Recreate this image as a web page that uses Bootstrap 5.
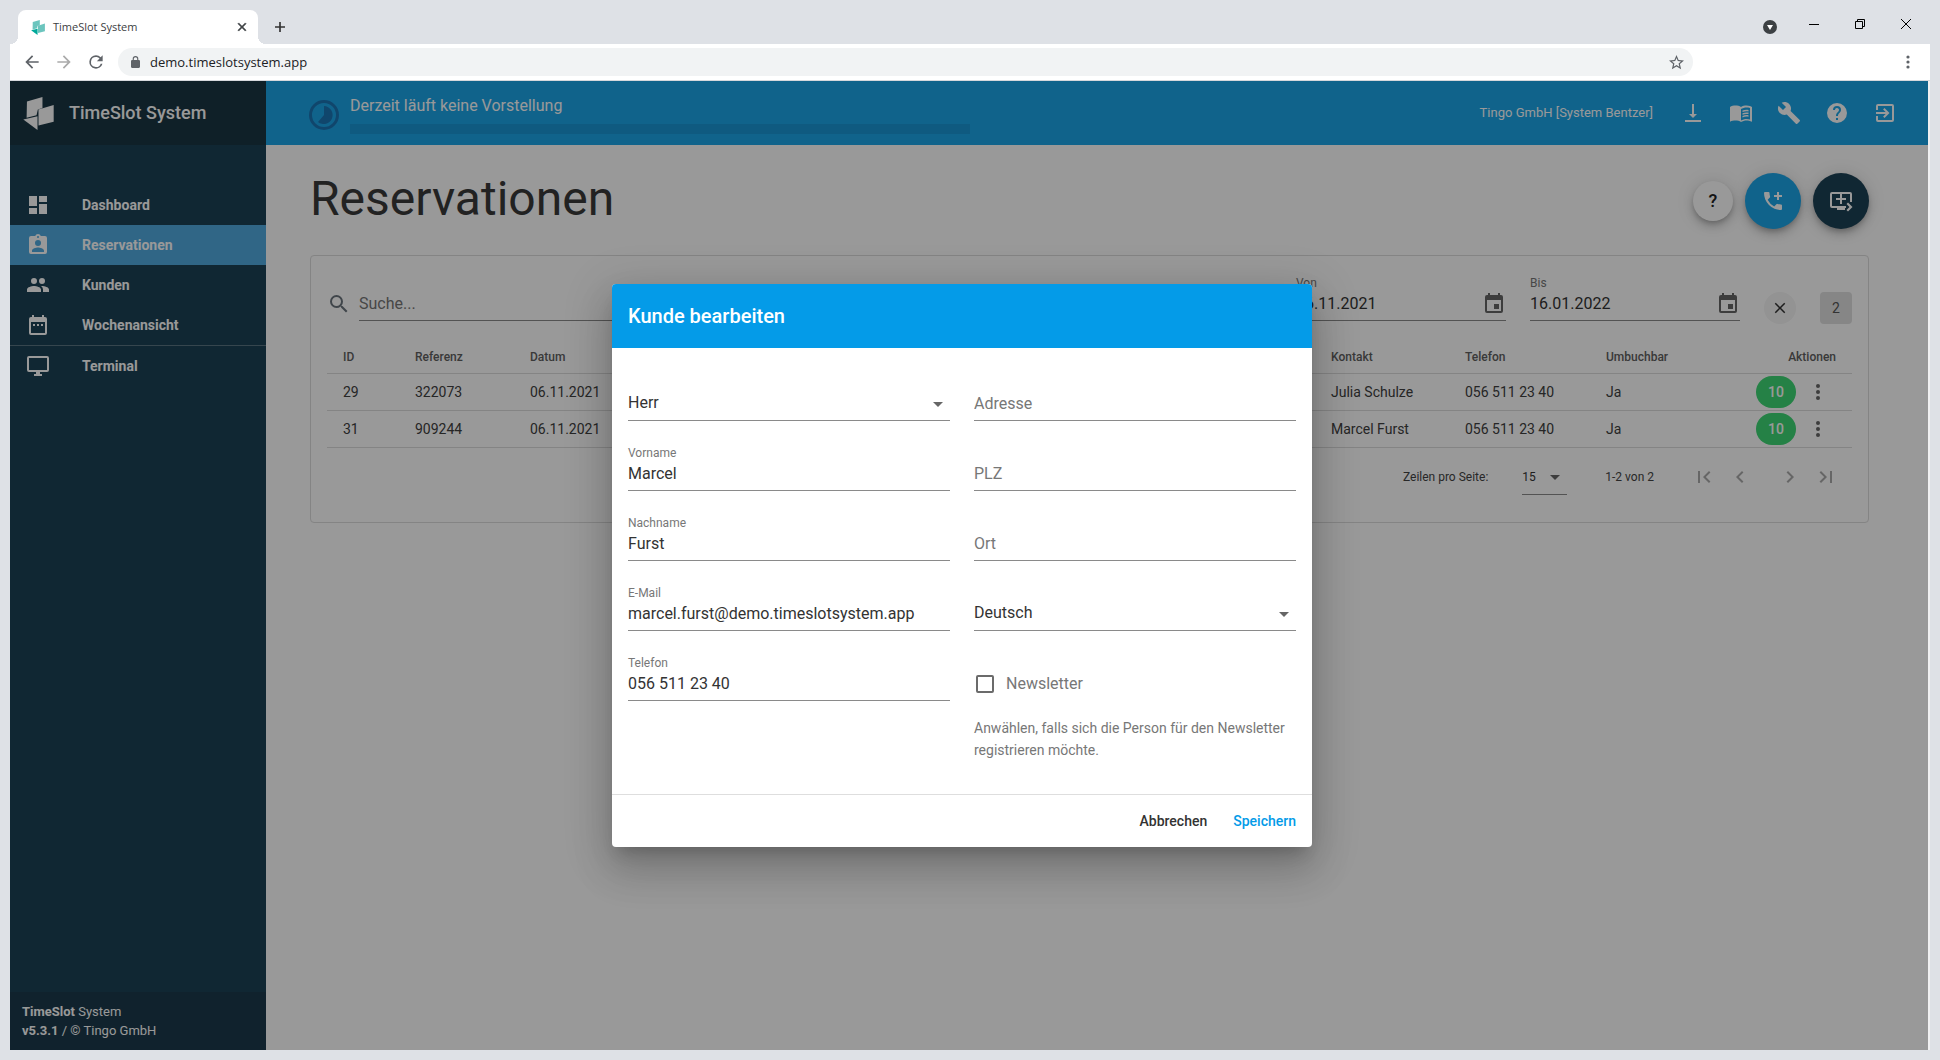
<!DOCTYPE html>
<html lang="de">
<head>
<meta charset="utf-8">
<title>TimeSlot System</title>
<meta name="viewport" content="width=device-width, initial-scale=1">
<link href="https://cdn.jsdelivr.net/npm/bootstrap@5.3.0/dist/css/bootstrap.min.css" rel="stylesheet">
<style>
:root{--frame:#dee1e6;--brand:#1ca5e8;--navy:#1c4155;--ui:"Open Sans","Noto Sans",sans-serif}
body{font-family:Roboto,sans-serif;font-size:14px;line-height:20px;background:var(--frame);color:#333}
svg{display:block;fill:currentColor;flex:none}
button{border:0;background:none;padding:0;color:inherit;font-weight:inherit}
.line-icon{fill:none;stroke:currentColor}
.dim{color:#aaa}
/* browser frame */
.tabstrip{height:44px;padding:10px 12px 0 18px}
.tab{width:240px;height:34px;background:#fff;border-radius:8px 8px 0 0;padding:0 9px 0 13px;font:11px/16px var(--ui);color:#3c4043;position:relative}
.tab::before,.tab::after{content:"";position:absolute;bottom:0;width:8px;height:8px}
.tab::before{left:-8px;background:radial-gradient(circle at 0 0,transparent 8px,#fff 8px)}
.tab::after{right:-8px;background:radial-gradient(circle at 100% 0,transparent 8px,#fff 8px)}
.new-tab{margin-left:12px}
.win-ctl{gap:36px;color:#000;padding-right:17px;padding-bottom:6px}
.win-menu{margin-right:-4px;margin-top:5px}
.viewport-frame{margin:0 10px 10px 10px}
.toolbar{height:37px;background:#fff;border-bottom:1px solid #d6d8dc;padding:0 14px 0 12px;color:#5f6368}
.address{height:28px;border-radius:14px;background:#f1f3f4;margin-left:12px;margin-right:207px;padding:0 9px 0 13px}
.address input{border:0;background:none;font:13px/20px var(--ui);color:#202124;outline:0;padding:0;margin-left:10px}
/* application */
.app{background:#fff;margin-right:2px;box-shadow:2px 0 0 #f0f0f1}
.sidebar{width:256px;background:var(--navy);color:#fff;flex:none}
.brandbar{height:64px;background:#1a3644;padding:0 13px;gap:15px;font-size:18px;font-weight:500}
.side-nav{padding-top:40px}
.side-link{height:40px;padding-left:16px;gap:32px;color:#fff;text-decoration:none;font-weight:700}
.side-link.active{background:#50aadf}
.side-rule{height:1px;background:#5a7583}
.side-foot{height:58px;background:#1b3a4b;padding:10px 12px;font-size:13px;line-height:19px}
.topbar{height:64px;background:var(--brand);color:#fff;padding:0 31px 0 43px}
.show-now{padding-top:3px;gap:11px}
.show-title{font-size:16px;line-height:20px}
.show-bar{height:10px;width:620px;background:#1a97d5;border-radius:0}
.user{font-size:13px}
.main-area{padding:24px 59px 0 44px}
.page-title{font-size:48px;line-height:60px;padding-bottom:4px;font-weight:400;margin:0;color:#3a3a3a}
.fab{width:56px;height:56px;border-radius:50%;color:#fff;display:grid;place-items:center;background:var(--brand);box-shadow:0 3px 5px -1px #0003,0 6px 10px #0002,0 1px 18px #0002}
.fab-dark{background:var(--navy)}
.fab-sm{width:40px;height:40px;background:#fff;color:#222;font-size:18px;font-weight:500}
.panel{border:1px solid #dcdcdc;border-radius:4px;margin-top:22px;padding:20px 16px 0;height:268px}
.search-box{margin-top:10px}
.uline{border:0;border-bottom:1px solid #8a8a8a;border-radius:0;background:none;outline:0;padding:0;font-size:16px;color:#333;height:35px;width:100%;display:block;appearance:none}
.uline::placeholder{color:#777;opacity:1}
.date-box{width:210px}
.cap{font-size:12px;line-height:14px;height:14px;color:#777;display:block}
.date-ctl{height:31px;border-bottom:1px solid #8a8a8a;padding-bottom:2px;color:#666}
.date-ctl input{border:0;outline:0;background:none;font-size:16px;padding:0;color:#333;min-width:0}
.grid-table{table-layout:fixed;margin:13px 0 0;width:100%;border-collapse:collapse;color:#404040}
.grid-table th{font-size:12px;font-weight:500;color:#606060;height:36px;padding:4px 16px 0}
.grid-table td{height:37px;padding:0 16px}
.grid-table tr{border-bottom:1px solid #dcdcdc}
.acts{gap:10px;color:#666}
.chip{width:40px;height:32px;border-radius:16px;background:#3fd775;color:#fff;font-weight:500;line-height:32px;text-align:center}
.sq{width:32px;height:32px;line-height:32px;border-radius:4px;background:#e0e0e0;text-align:center;color:#555}
.round{width:32px;height:32px;border-radius:50%;background:#f5f5f5;display:grid;place-items:center}
.pager{font-size:12px;color:#444;padding:12px 14px 0 0}
.pager .uline{font-size:12px}
.page-size{width:45px;margin:0 38px 0 34px}
.pager-range{margin-right:38px}
.pager-gap{width:26px}
.arrow-wrap{position:relative}
.arrow-wrap svg{position:absolute;right:0;top:50%;margin-top:-12px;pointer-events:none;color:#666}
/* dialog */
.overlay{position:absolute;inset:0 2px 0 0;background:rgba(0,0,0,.4);padding-right:14px}
.dialog{width:700px;border-radius:4px;background:#fff;overflow:hidden;box-shadow:0 11px 15px -7px #0003,0 24px 38px 3px #00000024,0 9px 46px 8px #0000001f}
.dialog-head{height:64px;background:#049be8;color:#fff;padding:0 16px;font-size:20px;font-weight:500;margin:0}
.dialog-body{padding:12px 16px 0;height:446px}
.dialog-foot{height:53px;border-top:1px solid #dedede;padding:0 16px;gap:26px;font-weight:500}
.save{color:#049be8}
.fields{flex:1 1 0}
.field{height:70px;padding-top:16px}
.field .cap{height:10px}
.tick-row{height:35px;font-size:16px;color:#777}
.tick{width:18px;height:18px;border:2px solid #6b6b6b;border-radius:2px;appearance:none;margin:0 12px 0 2px}
.hint{color:#777;line-height:22px;margin:7px 0 0}
</style>
<script src="https://cdn.jsdelivr.net/npm/bootstrap@5.3.0/dist/js/bootstrap.bundle.min.js"></script>
</head>
<body class="d-flex flex-column vh-100 overflow-hidden">
<svg width="0" height="0" class="position-absolute" aria-hidden="true">
  <symbol id="logo" viewBox="40 270 92 100"><path d="M51 284 98 270v33l-14 5-4 17-30 8zM86 308l46-14v51l-46 11z"/><path class="logo-tip" d="m40 338 43-10v42z"/></symbol>
  <symbol id="close" viewBox="0 0 24 24"><path d="M19 6.41 17.59 5 12 10.59 6.41 5 5 6.41 10.59 12 5 17.59 6.41 19 12 13.41 17.59 19 19 17.59 13.41 12z"/></symbol>
  <symbol id="caret" viewBox="0 0 24 24"><path d="m7 10 5 5 5-5z"/></symbol>
  <symbol id="event" viewBox="0 0 24 24"><path d="M17 12h-5v5h5v-5zM16 1v2H8V1H6v2H5a2 2 0 0 0-2 2v14a2 2 0 0 0 2 2h14a2 2 0 0 0 2-2V5a2 2 0 0 0-2-2h-1V1h-2zm3 18H5V8h14v11z"/></symbol>
  <symbol id="dots" viewBox="0 0 24 24"><circle cx="12" cy="6" r="2"/><circle cx="12" cy="12" r="2"/><circle cx="12" cy="18" r="2"/></symbol>
</svg>

<header class="tabstrip d-flex align-items-center">
  <div class="tab d-flex align-items-center">
    <svg width="14" height="15" viewBox="40 270 92 100" aria-hidden="true"><path fill="#6cc5be" d="M51 284 98 270v33l-14 5-4 17-30 8zM86 308l46-14v51l-46 11z"/><path fill="#00a99a" d="m40 338 43-10v42z"/></svg>
    <span class="flex-grow-1 ps-2">TimeSlot System</span>
    <button aria-label="Tab schließen"><svg width="14" height="14" stroke="currentColor"><use href="#close"/></svg></button>
  </div>
  <button class="new-tab" aria-label="Neuer Tab"><svg width="20" height="20" viewBox="0 0 24 24"><path d="M18 13h-5v5h-2v-5H6v-2h5V6h2v5h5z"/></svg></button>
  <div class="win-ctl ms-auto d-flex align-items-center">
    <button class="win-menu" aria-label="Tabs suchen"><svg width="14" height="14" viewBox="0 0 14 14"><circle cx="7" cy="7" r="7" fill="#3c4043"/><path d="M4 5h6l-3 5z" fill="#fff"/></svg></button>
    <button aria-label="Minimieren"><svg width="10" height="10"><path d="M0 5h10v1H0z"/></svg></button>
    <button aria-label="Verkleinern"><svg class="line-icon" width="10" height="10"><path d="M.5 2.500h7v7h-7zM2.500 2.500v-2h7v7h-2"/></svg></button>
    <button aria-label="Schließen"><svg class="line-icon" width="10" height="10"><path d="m0 0 10 10M10 0 0 10"/></svg></button>
  </div>
</header>

<div class="viewport-frame flex-grow-1 d-flex flex-column">
  <div class="toolbar d-flex align-items-center">
    <button aria-label="Zurück"><svg width="20" height="20" viewBox="0 0 24 24"><path d="M20 11H7.830l5.590-5.590L12 4l-8 8 8 8 1.410-1.410L7.830 13H20z"/></svg></button>
    <button class="dim ms-2 ps-1" aria-label="Vorwärts" disabled><svg width="20" height="20" viewBox="0 0 24 24"><path d="m12 4-1.410 1.410L16.170 11H4v2h12.170l-5.580 5.590L12 20l8-8z"/></svg></button>
    <button class="ms-2 ps-1" aria-label="Neu laden"><svg width="20" height="20" viewBox="0 0 24 24"><path d="M17.650 6.350A7.960 7.960 0 0 0 12 4a8 8 0 1 0 7.730 10h-2.080A6 6 0 1 1 12 6c1.660 0 3.140.69 4.220 1.780L13 11h7V4z"/></svg></button>
    <div class="address flex-grow-1 d-flex align-items-center">
      <svg width="9" height="12" viewBox="4 1 16 21" preserveAspectRatio="none"><path d="M18 8h-1V6A5 5 0 0 0 7 6v2H6a2 2 0 0 0-2 2v10c0 1.100.9 2 2 2h12a2 2 0 0 0 2-2V10a2 2 0 0 0-2-2zM9 6a3 3 0 0 1 6 0v2H9z"/></svg>
      <input class="flex-grow-1" aria-label="Adresse" value="demo.timeslotsystem.app">
      <svg width="15" height="15" viewBox="2 2 20 20"><path d="m22 9.240-7.190-.62L12 2 9.190 8.630 2 9.240l5.460 4.730L5.820 21 12 17.270 18.180 21l-1.630-7.030zM12 15.400l-3.760 2.270 1-4.280-3.320-2.880 4.380-.38L12 6.100l1.710 4.040 4.380.38-3.320 2.880 1 4.280z"/></svg>
    </div>
    <button aria-label="Menü"><svg width="16" height="16"><circle cx="8" cy="3" r="1.600"/><circle cx="8" cy="8" r="1.600"/><circle cx="8" cy="13" r="1.600"/></svg></button>
  </div>

  <div class="position-relative flex-grow-1 d-flex flex-column">
  <div class="app flex-grow-1 d-flex">
    <aside class="sidebar d-flex flex-column">
      <div class="brandbar d-flex align-items-center"><svg width="31" height="33"><use href="#logo"/></svg><span>TimeSlot System</span></div>
      <nav class="side-nav flex-grow-1">
        <a href="#" class="side-link d-flex align-items-center"><svg width="24" height="24"><path d="M3 13h8V3H3v10zm0 8h8v-6H3v6zm10 0h8V11h-8v10zm0-18v6h8V3h-8z"/></svg>Dashboard</a>
        <a href="#" class="side-link active d-flex align-items-center"><svg width="24" height="24"><path d="M19 3h-4.180a3 3 0 0 0-5.640 0H5a2 2 0 0 0-2 2v14a2 2 0 0 0 2 2h14a2 2 0 0 0 2-2V5a2 2 0 0 0-2-2zm-7 0a1 1 0 1 1 0 2 1 1 0 0 1 0-2zm0 4a3 3 0 1 1 0 6 3 3 0 0 1 0-6zm6 12H6v-1.400c0-2 4-3.100 6-3.100s6 1.100 6 3.100V19z"/></svg>Reservationen</a>
        <a href="#" class="side-link d-flex align-items-center"><svg width="24" height="24"><path d="M16 11a3 3 0 1 0 0-6 3 3 0 0 0 0 6zm-8 0a3 3 0 1 0 0-6 3 3 0 0 0 0 6zm0 2c-2.330 0-7 1.170-7 3.500V19h14v-2.500C15 14.170 10.330 13 8 13zm8 0-.97.05A4.200 4.200 0 0 1 17 16.500V19h6v-2.500c0-2.330-4.670-3.500-7-3.500z"/></svg>Kunden</a>
        <a href="#" class="side-link d-flex align-items-center"><svg width="24" height="24"><path d="M9 11H7v2h2zm4 0h-2v2h2zm4 0h-2v2h2zm2-7h-1V2h-2v2H8V2H6v2H5a2 2 0 0 0-2 2v14a2 2 0 0 0 2 2h14a2 2 0 0 0 2-2V6a2 2 0 0 0-2-2zm0 16H5V9h14z"/></svg>Wochenansicht</a>
        <div class="side-rule"></div>
        <a href="#" class="side-link d-flex align-items-center"><svg width="24" height="24"><path d="M21 2H3a2 2 0 0 0-2 2v12a2 2 0 0 0 2 2h7v2H8v2h8v-2h-2v-2h7a2 2 0 0 0 2-2V4a2 2 0 0 0-2-2zm0 14H3V4h18z"/></svg>Terminal</a>
      </nav>
      <div class="side-foot"><b>TimeSlot</b> System<br><b>v5.3.1</b> / © Tingo GmbH</div>
    </aside>
    <div class="flex-grow-1">
      <div class="topbar d-flex align-items-center">
        <div class="show-now d-flex align-items-center">
          <svg width="30" height="30" viewBox="0 0 30 30" color="#1c75b5"><path fill-rule="evenodd" d="M15 0a15 15 0 1 0 0 30 15 15 0 0 0 0-30zm0 3a12 12 0 1 1 0 24 12 12 0 0 1 0-24z"/><path d="M15 6a9 9 0 1 1-6 16l6-7z"/></svg>
          <div><div class="show-title">Derzeit läuft keine Vorstellung</div><div class="show-bar progress mt-2"></div></div>
        </div>
        <div class="ms-auto d-flex align-items-center gap-4">
          <span class="user me-1">Tingo GmbH [System Bentzer]</span>
          <a href="#" class="text-white" aria-label="Herunterladen"><svg width="24" height="24"><path d="M16 13h-3V3h-2v10H8l4 4zM4 19v2h16v-2z"/></svg></a>
          <a href="#" class="text-white" aria-label="Handbuch"><svg width="24" height="24"><path fill-rule="evenodd" d="M21 5a12 12 0 0 0-3.500-.5c-1.950 0-4.050.4-5.500 1.500-1.450-1.100-3.550-1.500-5.500-1.500S2.450 4.900 1 6v14.700c1.800-1 3.600-1.200 5.500-1.200 1.950 0 4.050.4 5.500 1.500 1.350-.85 3.800-1.500 5.500-1.500 1.650 0 3.350.3 5.500 1.200V6c-.6-.45-1.250-.75-2-1zm0 13.500A12 12 0 0 0 17.500 18c-1.700 0-4.150.65-5.500 1.500V8c1.350-.85 3.800-1.500 5.500-1.500 1.200 0 2.400.15 3.500.5z"/><path d="M13.500 9.500c2-.8 4-1 6-.6v1.500c-2-.4-4-.2-6 .6zM13.500 12.200c2-.8 4-1 6-.6v1.500c-2-.4-4-.2-6 .6zM13.500 14.900c2-.8 4-1 6-.6v1.500c-2-.4-4-.2-6 .6z"/></svg></a>
          <a href="#" class="text-white" aria-label="Werkzeuge"><svg width="24" height="24"><path d="m22.700 19-9.100-9.100c.9-2.300.4-5-1.500-6.900-2-2-5-2.400-7.400-1.300L9 6 6 9 1.600 4.700C.4 7.100.9 10.100 2.900 12.100c1.900 1.900 4.600 2.400 6.900 1.500l9.100 9.100c.4.4 1 .4 1.400 0l2.300-2.300c.5-.4.5-1.100.1-1.400z"/></svg></a>
          <a href="#" class="text-white" aria-label="Hilfe"><svg width="24" height="24"><path d="M12 2a10 10 0 1 0 0 20 10 10 0 0 0 0-20zm1 17h-2v-2h2zm2.070-7.750-.9.920C13.450 12.900 13 13.500 13 15h-2v-.5c0-1.100.45-2.100 1.170-2.830l1.240-1.260A2 2 0 1 0 10 9H8a4 4 0 1 1 8 0c0 .88-.36 1.680-.93 2.250z"/></svg></a>
          <a href="#" class="text-white" aria-label="Abmelden"><svg width="24" height="24"><path d="M10.090 15.590 11.500 17l5-5-5-5-1.410 1.410L12.670 11H3v2h9.670zM19 3H5a2 2 0 0 0-2 2v4h2V5h14v14H5v-4H3v4a2 2 0 0 0 2 2h14a2 2 0 0 0 2-2V5a2 2 0 0 0-2-2z"/></svg></a>
        </div>
      </div>
      <main class="main-area">
        <div class="d-flex align-items-center">
          <h1 class="page-title flex-grow-1">Reservationen</h1>
          <div class="d-flex align-items-center gap-2">
            <button class="fab fab-sm me-1" aria-label="Hilfe">?</button>
            <button class="fab me-1" aria-label="Telefonische Reservation"><svg width="24" height="24"><path d="M20 15.500a11.400 11.400 0 0 1-3.570-.57 1 1 0 0 0-1.020.25l-2.200 2.200a15.100 15.100 0 0 1-6.590-6.590l2.200-2.200a1 1 0 0 0 .25-1.020A11.400 11.400 0 0 1 8.500 4a1 1 0 0 0-1-1H4a1 1 0 0 0-1 1 17 17 0 0 0 17 17 1 1 0 0 0 1-1v-3.500a1 1 0 0 0-1-1zM21 6h-3V3h-2v3h-3v2h3v3h2V8h3z"/></svg></button>
            <button class="fab fab-dark" aria-label="Neue Reservation"><svg width="24" height="24"><path d="M17 9v2h-4v4h-2v-4H7V9h4V5h2v4zm4-6H3a2 2 0 0 0-2 2v12a2 2 0 0 0 2 2h5v2h8v-2h1v-2H3V5h18v8h2V5a2 2 0 0 0-2-2zm2.500 15L19 22.500 17.500 21l3-3-3-3 1.500-1.500z"/></svg></button>
          </div>
        </div>
        <section class="panel">
          <div class="d-flex align-items-start">
            <label for="q" class="mt-3 me-2 text-secondary"><svg width="24" height="24"><path d="M15.500 14h-.79l-.28-.27A6.470 6.470 0 0 0 16 9.500 6.500 6.500 0 1 0 9.500 16a6.500 6.500 0 0 0 4.230-1.570l.27.28v.79l5 4.990L20.490 19zm-6 0a4.500 4.500 0 1 1 0-9 4.500 4.500 0 0 1 0 9z"/></svg></label>
            <div class="search-box flex-grow-1 me-4"><input id="q" class="uline" placeholder="Suche..."></div>
            <div class="date-box me-4"><label class="cap" for="von">Von</label><div class="date-ctl d-flex align-items-center"><input class="flex-grow-1" id="von" value="06.11.2021"><svg width="24" height="24"><use href="#event"/></svg></div></div>
            <div class="date-box me-4"><label class="cap" for="bis">Bis</label><div class="date-ctl d-flex align-items-center"><input class="flex-grow-1" id="bis" value="16.01.2022"><svg width="24" height="24"><use href="#event"/></svg></div></div>
            <button class="round mt-3 me-4" aria-label="Filter löschen"><svg width="18" height="18"><use href="#close"/></svg></button>
            <div class="sq mt-3">2</div>
          </div>
          <table class="grid-table">
            <colgroup><col style="width:72px"><col style="width:115px"><col><col style="width:134px"><col style="width:141px"><col style="width:150px"><col style="width:112px"></colgroup>
            <thead><tr><th>ID</th><th>Referenz</th><th>Datum</th><th>Kontakt</th><th>Telefon</th><th>Umbuchbar</th><th class="text-end">Aktionen</th></tr></thead>
            <tbody>
              <tr><td>29</td><td>322073</td><td>06.11.2021</td><td class="text-nowrap">Julia Schulze</td><td class="text-nowrap">056 511 23 40</td><td>Ja</td><td><div class="acts d-flex align-items-center"><span class="chip flex-shrink-0">10</span><button aria-label="Aktionen"><svg width="24" height="24"><use href="#dots"/></svg></button></div></td></tr>
              <tr><td>31</td><td>909244</td><td>06.11.2021</td><td class="text-nowrap">Marcel Furst</td><td class="text-nowrap">056 511 23 40</td><td>Ja</td><td><div class="acts d-flex align-items-center"><span class="chip flex-shrink-0">10</span><button aria-label="Aktionen"><svg width="24" height="24"><use href="#dots"/></svg></button></div></td></tr>
            </tbody>
          </table>
          <div class="pager d-flex justify-content-end align-items-center">
            <label for="pp">Zeilen pro Seite:</label>
            <div class="page-size arrow-wrap"><select id="pp" class="uline"><option>15</option></select><svg width="24" height="24"><use href="#caret"/></svg></div>
            <span class="pager-range">1-2 von 2</span>
            <button class="dim" aria-label="Erste Seite"><svg width="24" height="24"><path d="M18.410 16.590 13.820 12l4.590-4.590L17 6l-6 6 6 6zM6 6h2v12H6z"/></svg></button>
            <button class="dim ms-2 ps-1" aria-label="Vorherige Seite"><svg width="24" height="24"><path d="M15.410 7.410 14 6l-6 6 6 6 1.410-1.410L10.830 12z"/></svg></button>
            <span class="pager-gap"></span>
            <button class="dim" aria-label="Nächste Seite"><svg width="24" height="24"><path d="M10 6 8.590 7.410 13.170 12l-4.580 4.590L10 18l6-6z"/></svg></button>
            <button class="dim ms-2 ps-1" aria-label="Letzte Seite"><svg width="24" height="24"><path d="M5.590 7.410 10.180 12l-4.590 4.590L7 18l6-6-6-6zM16 6h2v12h-2z"/></svg></button>
          </div>
        </section>
      </main>
    </div>
  </div>

  <div class="overlay d-flex align-items-center justify-content-center">
    <form class="dialog" role="dialog" aria-labelledby="dlg">
      <h2 class="dialog-head d-flex align-items-center" id="dlg">Kunde bearbeiten</h2>
      <div class="dialog-body d-flex gap-4">
        <div class="fields">
          <div class="field"><span class="cap"></span><div class="arrow-wrap"><select class="uline" aria-label="Anrede"><option>Herr</option></select><svg width="24" height="24"><use href="#caret"/></svg></div></div>
          <div class="field"><label class="cap" for="vn">Vorname</label><input class="uline" id="vn" value="Marcel"></div>
          <div class="field"><label class="cap" for="nn">Nachname</label><input class="uline" id="nn" value="Furst"></div>
          <div class="field"><label class="cap" for="em">E-Mail</label><input class="uline" id="em" value="marcel.furst@demo.timeslotsystem.app"></div>
          <div class="field"><label class="cap" for="tel">Telefon</label><input class="uline" id="tel" value="056 511 23 40"></div>
        </div>
        <div class="fields">
          <div class="field"><span class="cap"></span><input class="uline" aria-label="Adresse" placeholder="Adresse"></div>
          <div class="field"><span class="cap"></span><input class="uline" aria-label="PLZ" placeholder="PLZ"></div>
          <div class="field"><span class="cap"></span><input class="uline" aria-label="Ort" placeholder="Ort"></div>
          <div class="field"><span class="cap"></span><div class="arrow-wrap"><select class="uline" aria-label="Sprache"><option>Deutsch</option></select><svg width="24" height="24"><use href="#caret"/></svg></div></div>
          <div class="field"><span class="cap"></span><div class="tick-row d-flex align-items-center"><input type="checkbox" class="tick" id="nl"><label for="nl">Newsletter</label></div></div>
          <p class="hint">Anwählen, falls sich die Person für den Newsletter registrieren möchte.</p>
        </div>
      </div>
      <div class="dialog-foot d-flex align-items-center justify-content-end">
        <button type="button">Abbrechen</button>
        <button type="submit" class="save">Speichern</button>
      </div>
    </form>
  </div>
  </div>
</div>
</body>
</html>
